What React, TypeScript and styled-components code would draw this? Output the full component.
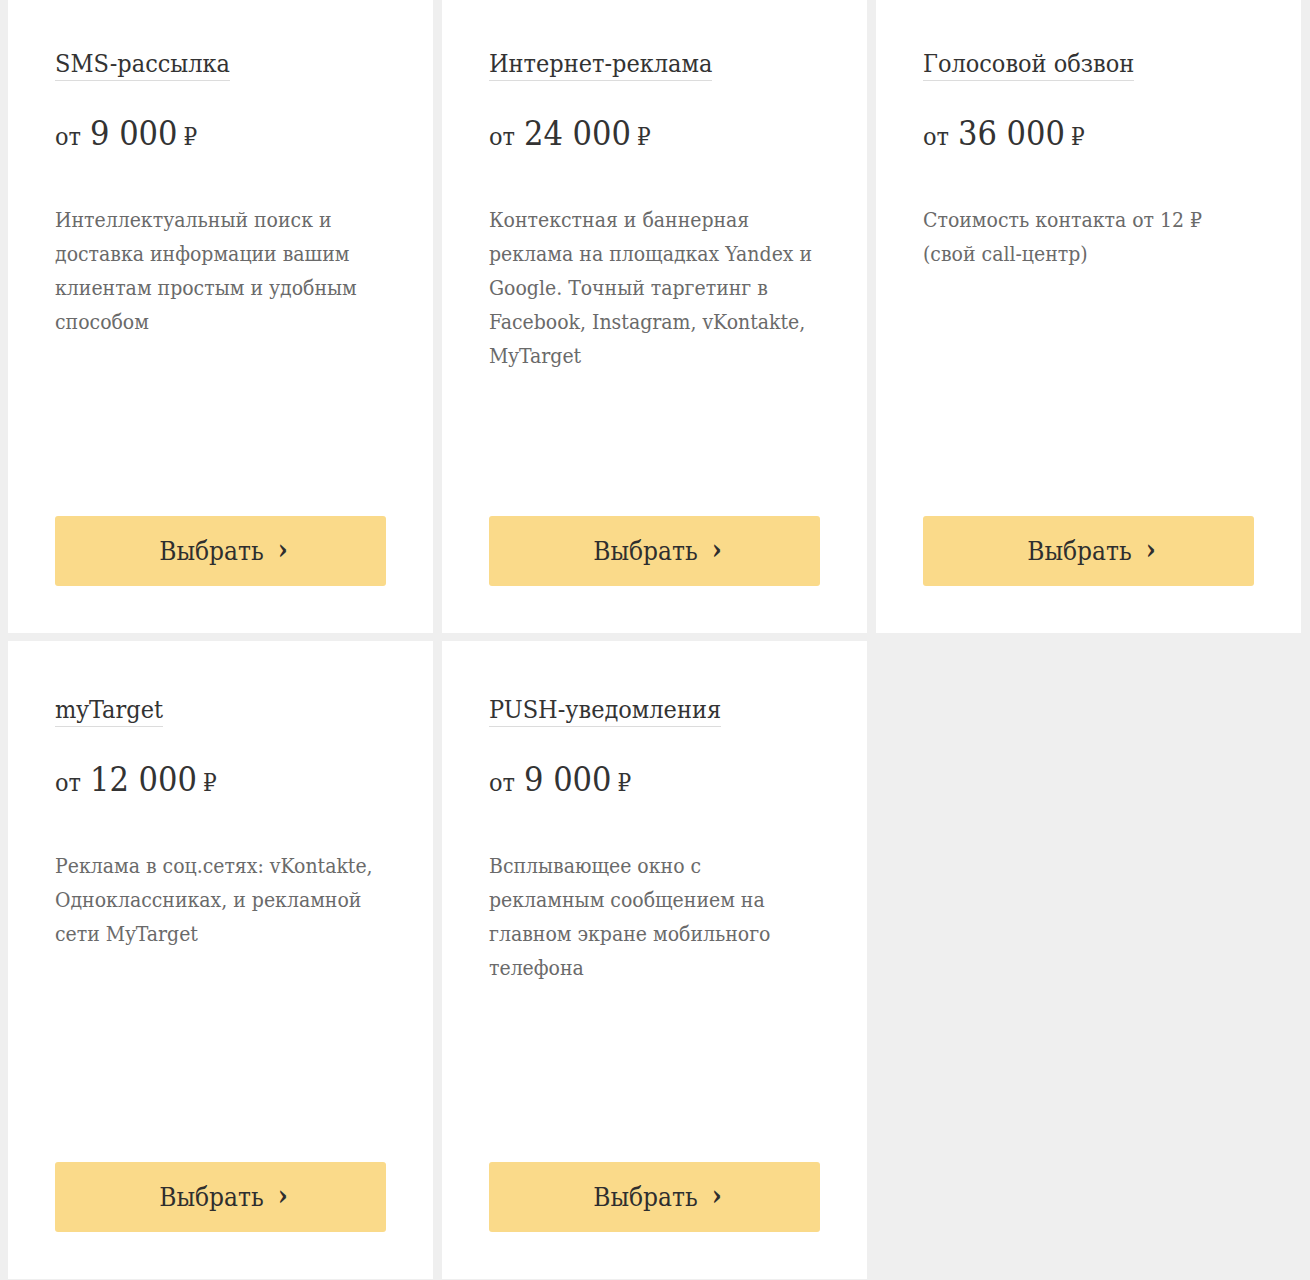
import styled, { createGlobalStyle } from 'styled-components';

type Offer = {
  title: string;
  price: string;
  text: string;
};

const offers: Offer[] = [
  {
    title: 'SMS-рассылка',
    price: '9 000',
    text: 'Интеллектуальный поиск и доставка информации вашим клиентам простым и удобным способом',
  },
  {
    title: 'Интернет-реклама',
    price: '24 000',
    text: 'Контекстная и баннерная реклама на площадках Yandex и Google. Точный таргетинг в Facebook, Instagram, vKontakte, MyTarget',
  },
  {
    title: 'Голосовой обзвон',
    price: '36 000',
    text: 'Стоимость контакта от 12 ₽ (свой call-центр)',
  },
  {
    title: 'myTarget',
    price: '12 000',
    text: 'Реклама в соц.сетях: vKontakte, Одноклассниках, и рекламной сети MyTarget',
  },
  {
    title: 'PUSH-уведомления',
    price: '9 000',
    text: 'Всплывающее окно с рекламным сообщением на главном экране мобильного телефона',
  },
];

const GlobalStyle = createGlobalStyle`
  html, body {
    margin: 0;
    padding: 0;
    background: #efefef;
    overflow: hidden;
  }
  body {
    font-family: 'DejaVu Serif Condensed', 'DejaVu Serif', serif;
  }
`;

const Grid = styled.div`
  display: grid;
  grid-template-columns: repeat(3, 425px);
  column-gap: 9px;
  row-gap: 8px;
  padding: 0 9px 0 8px;
  margin-top: -5px;
`;

const Card = styled.div`
  background: #fff;
  height: 638px;
  box-sizing: border-box;
  padding: 54px 47px 47px;
  display: flex;
  flex-direction: column;
  align-items: flex-start;
`;

const Title = styled.div`
  font-size: 25px;
  line-height: 30px;
  color: #333;
  border-bottom: 1px solid #dcdcdc;
  padding-bottom: 1px;
`;

const Price = styled.div`
  margin-top: 32px;
  color: #333;
  font-size: 25px;
  line-height: 40px;

  .sum {
    font-size: 34px;
    margin-left: 9px;
  }

  .cur {
    font-size: 24px;
    margin-left: 6px;
  }
`;

const Text = styled.div`
  margin-top: 46px;
  font-size: 21px;
  line-height: 34px;
  color: #6a6a6a;
  width: 100%;
`;

const Button = styled.button`
  margin-top: auto;
  width: 100%;
  height: 70px;
  border: none;
  border-radius: 3px;
  background: #fada8a;
  color: #2e2e2e;
  font-family: inherit;
  font-size: 26px;
  display: flex;
  align-items: center;
  justify-content: center;
  gap: 14px;
  padding: 0 0 0 6px;
  cursor: pointer;

  .arrow {
    font-size: 28px;
    font-weight: bold;
    line-height: 1;
    margin-top: -3px;
  }
`;

export default function App() {
  return (
    <>
      <GlobalStyle />
      <Grid>
        {offers.map((o) => (
          <Card key={o.title}>
            <Title>{o.title}</Title>
            <Price>
              от<span className="sum">{o.price}</span>
              <span className="cur">₽</span>
            </Price>
            <Text>{o.text}</Text>
            <Button>
              Выбрать <span className="arrow">›</span>
            </Button>
          </Card>
        ))}
      </Grid>
    </>
  );
}
